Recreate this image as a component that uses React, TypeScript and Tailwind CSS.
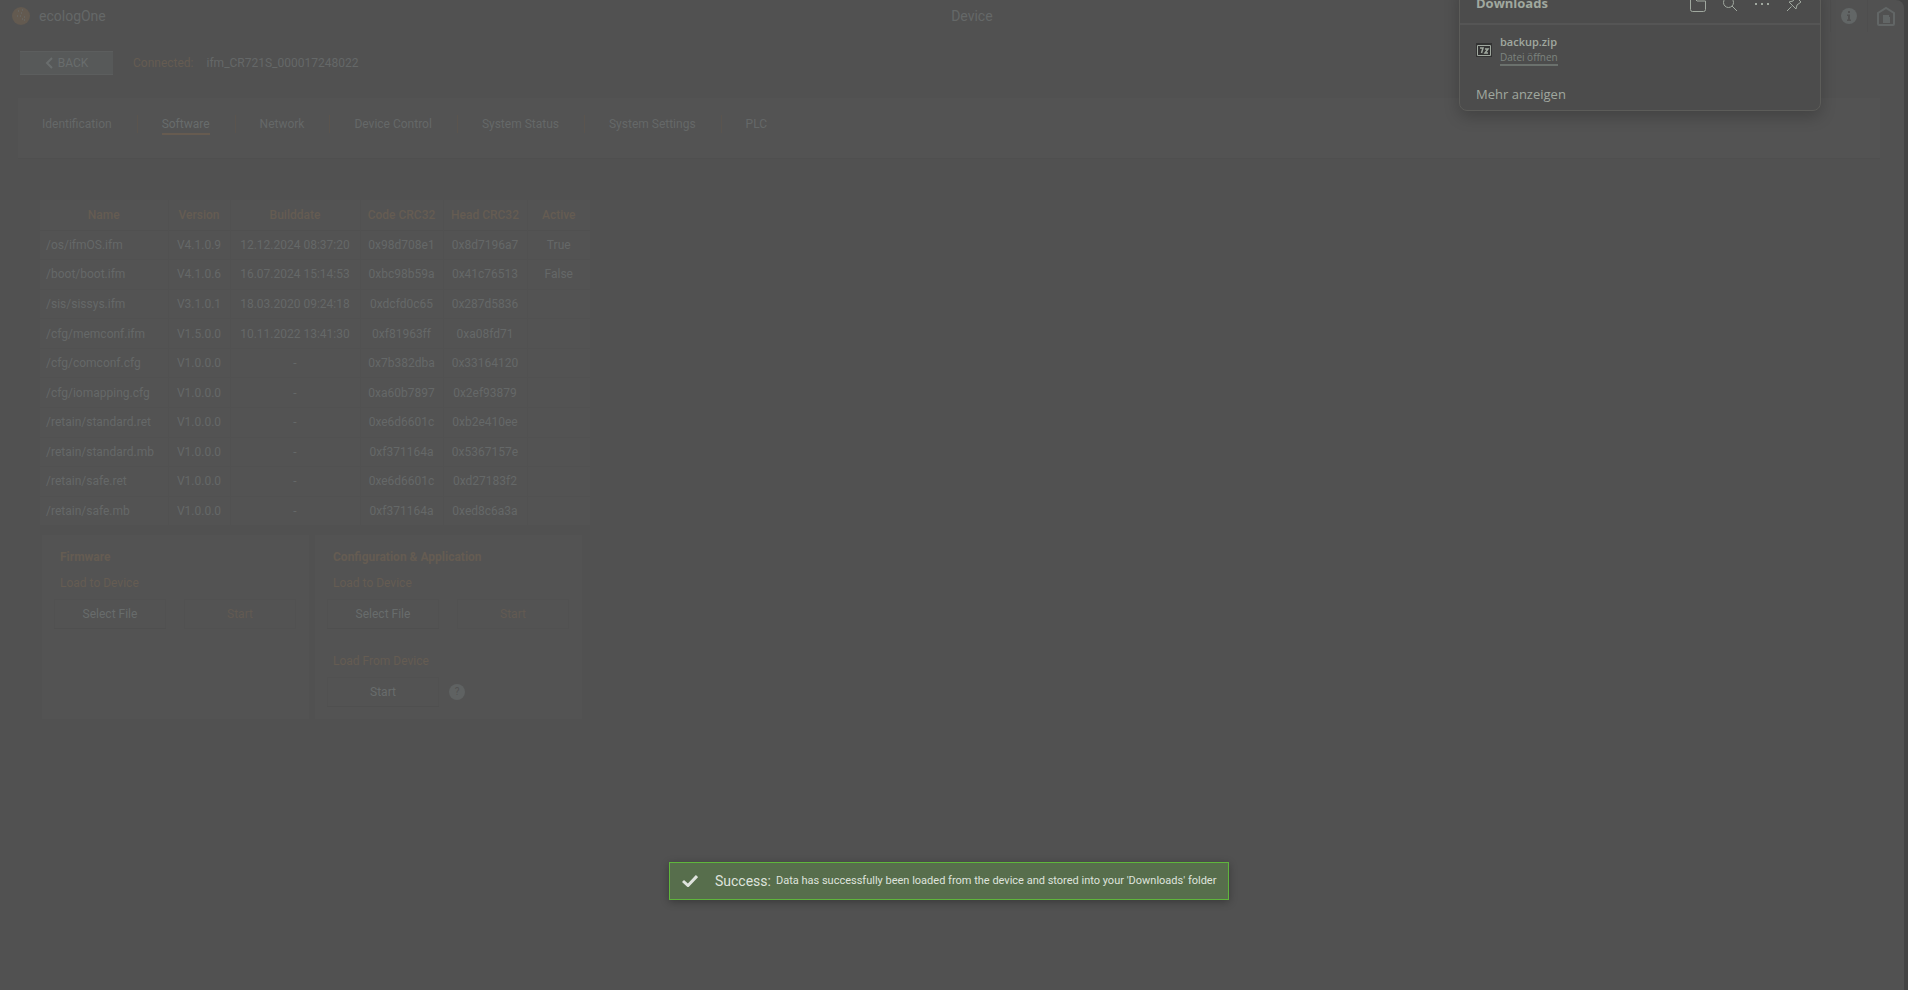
import type { ReactNode } from "react";

const tabs = [
  "Identification",
  "Software",
  "Network",
  "Device Control",
  "System Status",
  "System Settings",
  "PLC",
];

const columns = [
  { label: "Name", width: "w-[128px]" },
  { label: "Version", width: "w-[62px]" },
  { label: "Builddate", width: "w-[130px]" },
  { label: "Code CRC32", width: "w-[83px]" },
  { label: "Head CRC32", width: "w-[84px]" },
  { label: "Active", width: "w-[63px]" },
];

const files = [
  ["/os/ifmOS.ifm", "V4.1.0.9", "12.12.2024 08:37:20", "0x98d708e1", "0x8d7196a7", "True"],
  ["/boot/boot.ifm", "V4.1.0.6", "16.07.2024 15:14:53", "0xbc98b59a", "0x41c76513", "False"],
  ["/sis/sissys.ifm", "V3.1.0.1", "18.03.2020 09:24:18", "0xdcfd0c65", "0x287d5836", ""],
  ["/cfg/memconf.ifm", "V1.5.0.0", "10.11.2022 13:41:30", "0xf81963ff", "0xa08fd71", ""],
  ["/cfg/comconf.cfg", "V1.0.0.0", "-", "0x7b382dba", "0x33164120", ""],
  ["/cfg/iomapping.cfg", "V1.0.0.0", "-", "0xa60b7897", "0x2ef93879", ""],
  ["/retain/standard.ret", "V1.0.0.0", "-", "0xe6d6601c", "0xb2e410ee", ""],
  ["/retain/standard.mb", "V1.0.0.0", "-", "0xf371164a", "0x5367157e", ""],
  ["/retain/safe.ret", "V1.0.0.0", "-", "0xe6d6601c", "0xd27183f2", ""],
  ["/retain/safe.mb", "V1.0.0.0", "-", "0xf371164a", "0xed8c6a3a", ""],
];

const Header = () => (
  <header className="flex h-8 items-center justify-between pl-3 text-sm">
    <div className="flex items-center gap-[9px]">
      <svg viewBox="0 0 18 18" className="h-[18px] w-[18px]">
        <circle cx="9" cy="9" r="9" fill="#635a50" />
        <path d="M6 4h1M9 6h1M10 3h1M5 9h1M12 10h1M10 12h1M8 9h1M12 13h1" stroke="#6b6f6f" />
      </svg>
      <span>ecologOne</span>
    </div>
    <h1 className="pl-2">Device</h1>
    <div className="flex h-full items-center">
      <button aria-label="Info" className="flex h-full w-[38px] items-center justify-center border-x border-[#4e4e4e]">
        <svg viewBox="0 0 16 16" className="h-4 w-4">
          <circle cx="8" cy="8" r="8" fill="#626666" />
          <path d="M7 3h2v2H7zM6 6.500h3v5h1V13H6v-1.500h1V8H6z" fill="#515151" />
        </svg>
      </button>
      <button aria-label="Home" className="flex h-full w-9 items-center justify-center">
        <svg viewBox="0 0 20 20" className="h-5 w-5" fill="none" stroke="#626666" strokeWidth="2">
          <path d="M2 18V7l8-5 8 5v11q0 1-1 1H3q-1 0-1-1z" />
          <path d="M7 9h6v2h1v6H7z" fill="#626666" stroke="none" />
        </svg>
      </button>
    </div>
  </header>
);

const Tabs = () => (
  <nav className="mt-[23px] mr-6 ml-[18px] flex h-[61px] items-start border-b border-[#4f4f4f] bg-[#535353] pt-[17px]">
    {tabs.map((tab) => (
      <div key={tab} className="flex h-[18px] border-r border-[#5a544e] pr-[25px] pl-6 last:border-r-0">
        <button
          className={
            tab === "Software"
              ? "h-5 border-b-2 border-[#665b50] text-[#686c6c]"
              : "h-[18px]"
          }
        >
          {tab}
        </button>
      </div>
    ))}
  </nav>
);

const FileTable = () => (
  <table className="mt-[41px] ml-10 h-[325px] w-[550px] table-fixed border-collapse bg-[#535353]">
    <thead>
      <tr className="h-[30px] border-b border-[#505050] text-[#655c52]">
        {columns.map((column) => (
          <th
            key={column.label}
            className={`${column.width} border-r border-[#515151] font-medium last:border-r-0`}
          >
            {column.label}
          </th>
        ))}
      </tr>
    </thead>
    <tbody>
      {files.map((file) => (
        <tr key={file[0]} className="border-b border-[#515151] last:border-b-0">
          {file.map((value, i) => (
            <td
              key={i}
              className="border-r border-[#515151] text-center first:pl-[6px] first:text-left last:border-r-0"
            >
              {value}
            </td>
          ))}
        </tr>
      ))}
    </tbody>
  </table>
);

const ActionButton = ({ children, disabled }: { children: ReactNode; disabled?: boolean }) => (
  <button
    disabled={disabled}
    className="h-[30px] w-28 border border-[#515151] border-b-[#4f4f4f] text-[#686c6c] disabled:border-b-[#515151] disabled:text-[#625a52]"
  >
    {children}
  </button>
);

const Panel = ({ title, children }: { title: string; children: ReactNode }) => (
  <section className="h-[184px] w-[267px] bg-[#535353] px-3 pt-3">
    <h2 className="px-[6px] leading-5 font-bold text-[#655c52]">{title}</h2>
    {children}
  </section>
);

const LoadToDevice = () => (
  <>
    <h3 className="mt-1 px-[6px] leading-6 text-[#655c52]">Load to Device</h3>
    <div className="mt-1 flex gap-[18px]">
      <ActionButton>Select File</ActionButton>
      <ActionButton disabled>Start</ActionButton>
    </div>
  </>
);

const DownloadsPopup = () => (
  <aside className="absolute -top-4 right-[83px] h-[127px] w-[362px] rounded-lg border border-[#5c5c59] bg-[#4c4c4c] font-['Open_Sans',sans-serif] text-[#a0a89f] shadow-[0_6px_16px_rgba(0,0,0,0.2)]">
    <div className="flex h-10 items-center justify-between border-b-2 border-[#555] pr-[18px] pl-4">
      <h2 className="text-[13px] font-bold">Downloads</h2>
      <div className="flex gap-4">
        <button aria-label="Open folder">
          <svg viewBox="0 0 16 16" className="h-4 w-4" fill="none" stroke="currentColor">
            <path d="M.5 3V13.500q0 2 2 2h11q2 0 2-2V5H7L5 3z" />
          </svg>
        </button>
        <button aria-label="Search">
          <svg viewBox="0 0 16 16" className="h-4 w-4" fill="none" stroke="currentColor">
            <circle cx="6.500" cy="6.500" r="5" />
            <path d="M10 10l5 5" />
          </svg>
        </button>
        <button aria-label="More">
          <svg viewBox="0 0 16 16" className="h-4 w-4" fill="currentColor">
            <path d="M1 7h2v2H1zM7 7h2v2H7zM13 7h2v2h-2z" />
          </svg>
        </button>
        <button aria-label="Pin">
          <svg viewBox="0 0 16 16" className="h-4 w-4" fill="none" stroke="currentColor">
            <path d="M10 1l5 5-4 3-1 4-7-7 4-1zM5.500 10.500L1 15" />
          </svg>
        </button>
      </div>
    </div>
    <div className="flex items-center gap-2 px-4 pt-[9px]">
      <svg viewBox="0 0 16 14" className="h-[14px] w-4">
        <path d="M0 0h16v14H0z" fill="#333" />
        <path d="M1.500 2.500h13v10h-13z" fill="none" stroke="#a0a89f" />
        <path d="M4 5h3l-1.500 5M9 6h3l-3 4h3" fill="none" stroke="#a0a89f" strokeWidth="1.500" />
      </svg>
      <div className="flex flex-col items-start">
        <span className="text-[11px] leading-4 font-semibold">backup.zip</span>
        <a href="#" className="border-b-2 border-[#6b716d] text-[10px] leading-[14px] text-[#7d847f]">
          Datei öffnen
        </a>
      </div>
    </div>
    <a href="#" className="mt-4 block px-4 text-[13px] leading-6">
      Mehr anzeigen
    </a>
  </aside>
);

const SuccessToast = () => (
  <div
    role="status"
    className="absolute bottom-[90px] left-[669px] flex h-[38px] items-center border border-[#5fb63c] bg-[#576e4c] px-3 text-[#dfe3dd] shadow-[0_2px_8px_rgba(0,0,0,0.3)]"
  >
    <svg viewBox="0 0 16 12" className="mr-[17px] h-3 w-4" fill="none" stroke="currentColor" strokeWidth="3">
      <path d="M1 6l5 4.500L15 1" />
    </svg>
    <strong className="mr-[5px] text-sm font-normal">Success:</strong>
    <span className="text-[11px]">
      Data has successfully been loaded from the device and stored into your 'Downloads' folder
    </span>
  </div>
);

const App = () => {
  return (
    <div className="min-h-screen bg-[#434343] pr-1">
      <div className="relative min-h-screen rounded-tr-lg bg-[#515151] font-[Roboto,sans-serif] text-xs text-[#656868]">
        <Header />
        <div className="mt-[19px] flex items-center pl-5">
          <button className="flex h-6 w-[93px] items-center justify-center gap-[5px] border-y border-[#5c5e5e] bg-[#575959] text-[#696d6d]">
            <svg viewBox="0 0 8 12" className="h-3 w-2" fill="none" stroke="currentColor" strokeWidth="2">
              <path d="M7 1L2 6l5 5" />
            </svg>
            BACK
          </button>
          <span className="ml-5 text-[#655c52]">Connected:</span>
          <span className="ml-[13px]">ifm_CR721S_000017248022</span>
        </div>
        <Tabs />
        <FileTable />
        <div className="mt-[10px] ml-[42px] flex gap-[6px]">
          <Panel title="Firmware">
            <LoadToDevice />
          </Panel>
          <Panel title="Configuration & Application">
            <LoadToDevice />
            <h3 className="mt-5 px-[6px] leading-6 text-[#655c52]">Load From Device</h3>
            <div className="mt-1 flex items-center gap-[10px]">
              <ActionButton>Start</ActionButton>
              <button
                aria-label="Help"
                className="h-4 w-4 rounded-full bg-[#5f6262] text-[10px] leading-4 text-[#515151]"
              >
                ?
              </button>
            </div>
          </Panel>
        </div>
        <DownloadsPopup />
        <SuccessToast />
      </div>
    </div>
  );
};

export default App;
